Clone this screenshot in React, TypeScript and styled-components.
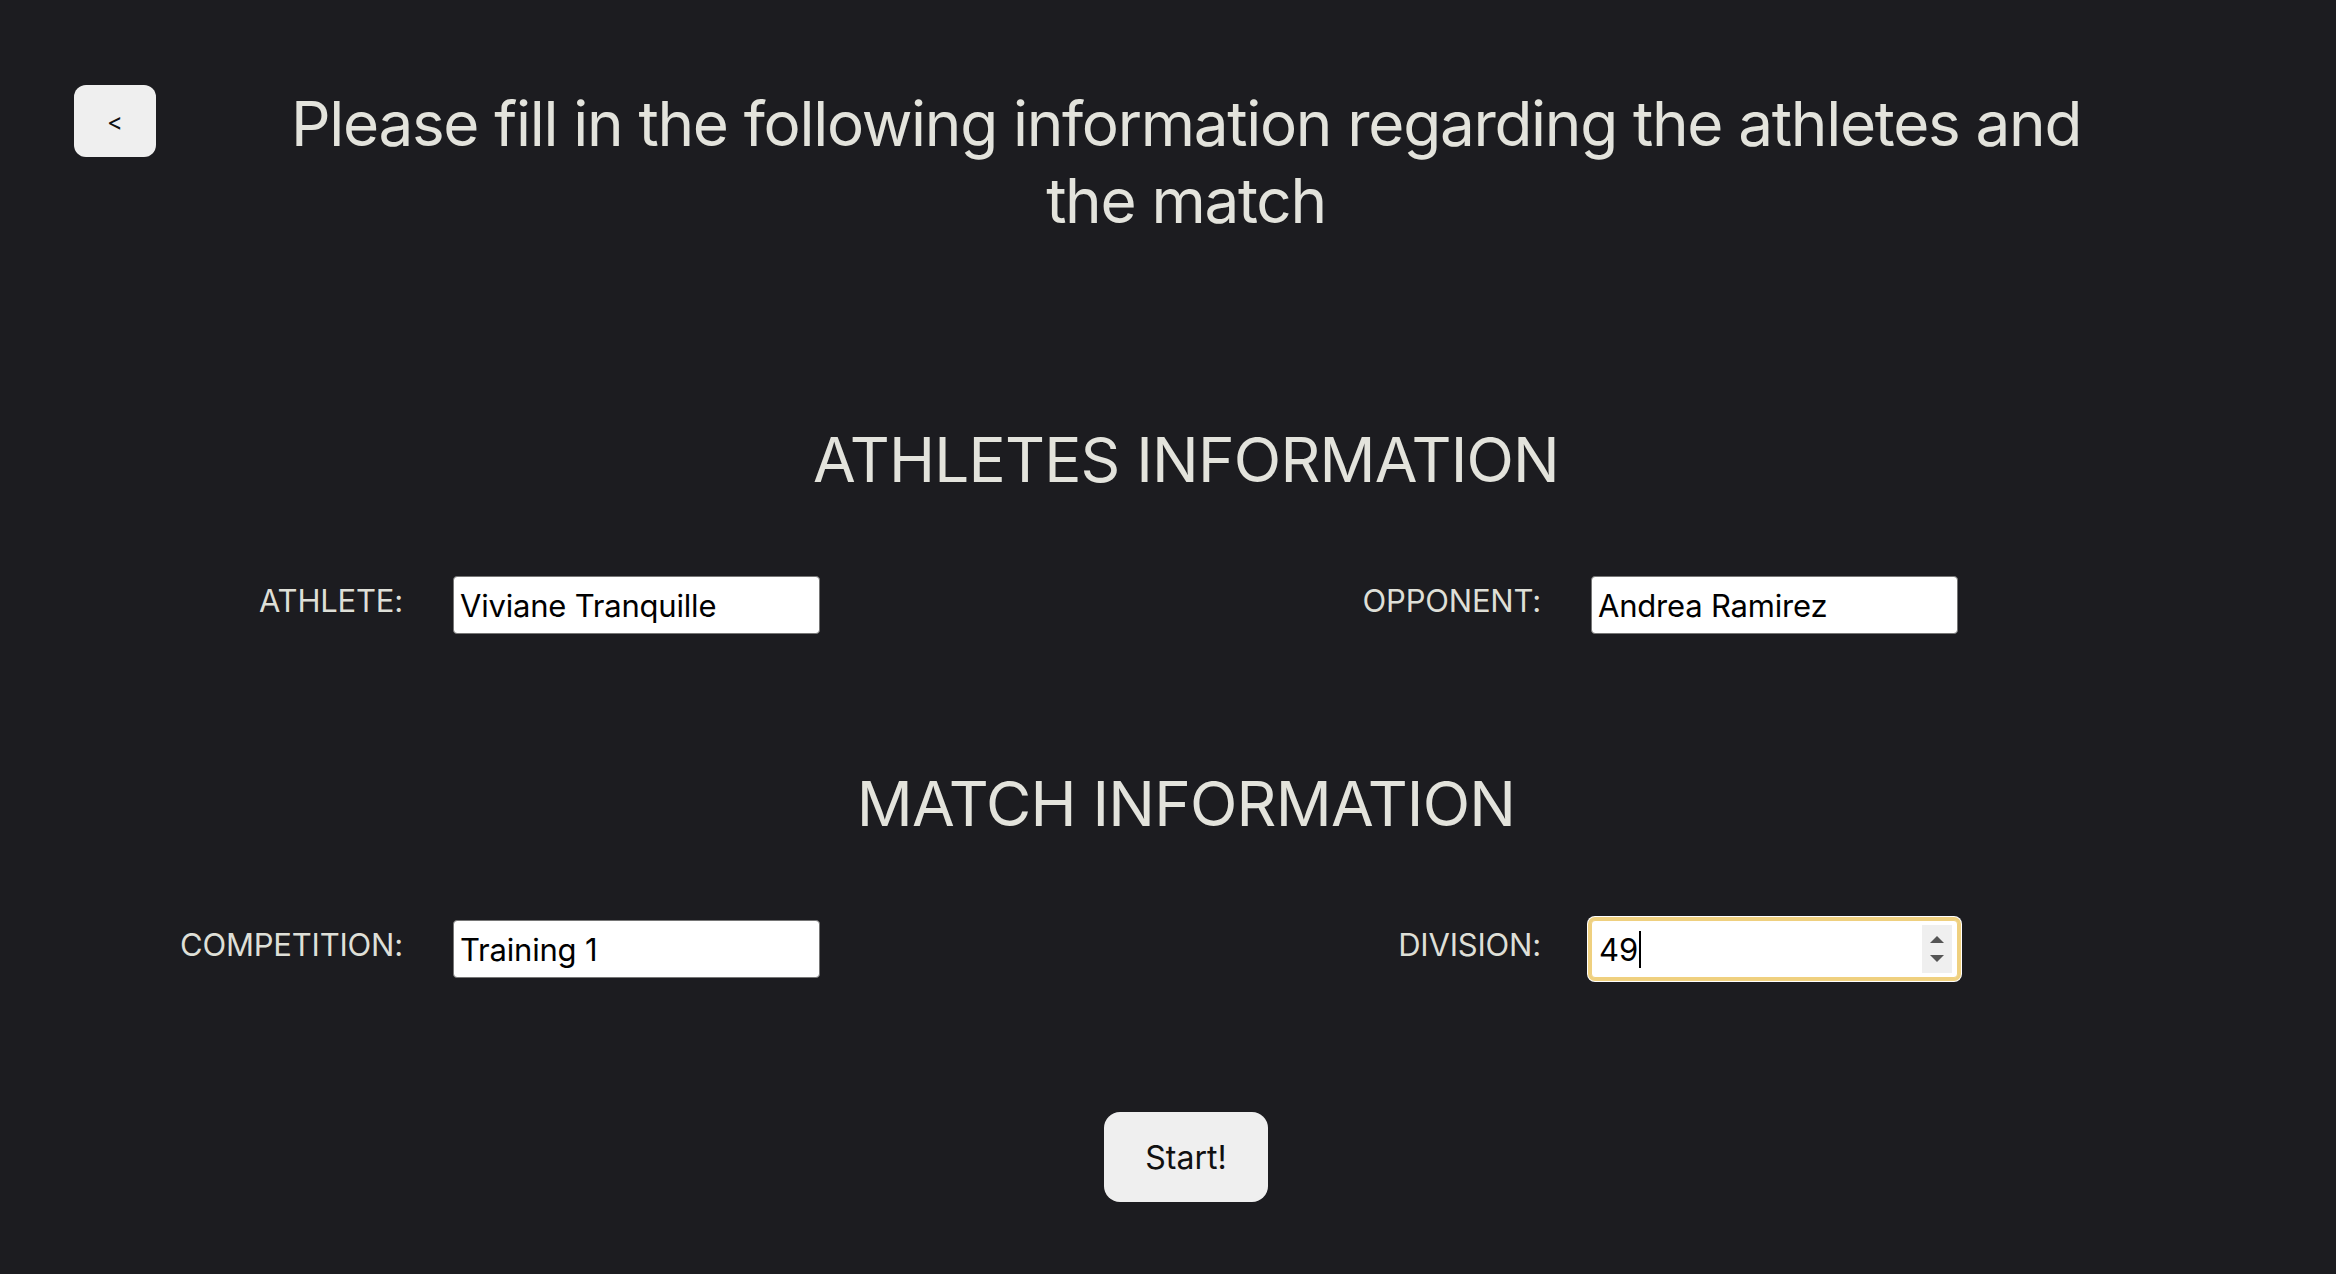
import React from "react";
import styled, { createGlobalStyle } from "styled-components";

const GlobalStyle = createGlobalStyle`
  html, body {
    margin: 0;
    padding: 0;
    background: #1c1c20;
  }
  * { box-sizing: border-box; }
  body {
    font-family: Inter, "Noto Sans", "Liberation Sans", sans-serif;
  }
`;

const Page = styled.main`
  min-height: 100vh;
  background: #1c1c20;
  color: #e3e3dc;
  padding: 85px 12px 72px 48px;
`;

const Header = styled.header`
  display: grid;
  grid-template-columns: 1fr minmax(0, 1840px) 1fr;
  align-items: start;
`;

const BackButton = styled.button`
  justify-self: start;
  margin-left: 26px;
  width: 82px;
  height: 72px;
  border: none;
  border-radius: 12px;
  background: #efefef;
  color: #111;
  font-family: inherit;
  font-size: 24px;
  cursor: pointer;
`;

const Title = styled.h1`
  margin: 0;
  text-align: center;
  font-size: 62px;
  font-weight: 400;
  line-height: 77px;
  letter-spacing: -1.3px;
`;

const Section = styled.section<{ $top: number }>`
  margin-top: ${(p) => p.$top}px;
`;

const SectionTitle = styled.h2`
  margin: 0 0 78px;
  text-align: center;
  font-size: 62px;
  font-weight: 400;
  line-height: 77px;
  letter-spacing: -0.8px;
`;

const FieldRow = styled.div`
  display: grid;
  grid-template-columns: 1fr 1fr;
`;

const Field = styled.div`
  display: grid;
  grid-template-columns: 355px 367px;
  column-gap: 50px;
  align-items: center;
`;

const Label = styled.label`
  justify-self: end;
  margin-bottom: 10px;
  font-size: 31px;
  font-weight: 400;
  color: #dedfd7;
  letter-spacing: -0.2px;
`;

const TextInput = styled.input`
  width: 367px;
  height: 58px;
  padding: 0 6px;
  border: 1px solid #767676;
  border-radius: 4px;
  background: #fff;
  color: #000;
  font-family: inherit;
  font-size: 31px;
  letter-spacing: -0.2px;
  outline: none;
`;

const NumberBox = styled.div`
  display: flex;
  align-items: center;
  width: 367px;
  height: 58px;
  padding: 0 5px 0 7px;
  border: 1px solid #efd07f;
  border-radius: 4px;
  background: #fff;
  box-shadow: 0 0 0 3px #efd07f, 0 0 0 4px #ffffff;
`;

const NumberInput = styled.input`
  width: 2ch;
  height: 100%;
  padding: 0;
  border: none;
  background: transparent;
  color: #000;
  font-family: inherit;
  font-size: 31px;
  outline: none;
  caret-color: transparent;
  -moz-appearance: textfield;
  &::-webkit-inner-spin-button,
  &::-webkit-outer-spin-button {
    -webkit-appearance: none;
    margin: 0;
  }
`;

const Caret = styled.span`
  width: 2px;
  height: 37px;
  margin-left: 1px;
  background: #000;
`;

const Spacer = styled.span`
  flex: 1;
`;

const Spinner = styled.div`
  display: flex;
  flex-direction: column;
  align-items: center;
  justify-content: center;
  gap: 12px;
  width: 30px;
  height: 48px;
  background: #efefef;
`;

const Arrow = styled.span<{ $down?: boolean }>`
  width: 0;
  height: 0;
  border-left: 7px solid transparent;
  border-right: 7px solid transparent;
  ${(p) =>
    p.$down
      ? "border-top: 7px solid #555;"
      : "border-bottom: 7px solid #555;"}
`;

const Actions = styled.div`
  display: flex;
  justify-content: center;
  margin-top: 134px;
`;

const StartButton = styled.button`
  width: 164px;
  height: 90px;
  border: none;
  border-radius: 16px;
  background: #efefef;
  color: #111;
  font-family: inherit;
  font-size: 32px;
  font-weight: 400;
  cursor: pointer;
`;

export default function App() {
  return (
    <>
      <GlobalStyle />
      <Page>
        <Header>
          <BackButton aria-label="Back">&lt;</BackButton>
          <Title>
            Please fill in the following information regarding the athletes
            and the match
          </Title>
        </Header>

        <Section $top={182}>
          <SectionTitle>ATHLETES INFORMATION</SectionTitle>
          <FieldRow>
            <Field>
              <Label htmlFor="athlete">ATHLETE:</Label>
              <TextInput id="athlete" defaultValue="Viviane Tranquille" />
            </Field>
            <Field>
              <Label htmlFor="opponent">OPPONENT:</Label>
              <TextInput id="opponent" defaultValue="Andrea Ramirez" />
            </Field>
          </FieldRow>
        </Section>

        <Section $top={131}>
          <SectionTitle>MATCH INFORMATION</SectionTitle>
          <FieldRow>
            <Field>
              <Label htmlFor="competition">COMPETITION:</Label>
              <TextInput id="competition" defaultValue="Training 1" />
            </Field>
            <Field>
              <Label htmlFor="division">DIVISION:</Label>
              <NumberBox>
                <NumberInput id="division" type="number" defaultValue={49} />
                <Caret aria-hidden />
                <Spacer />
                <Spinner aria-hidden>
                  <Arrow />
                  <Arrow $down />
                </Spinner>
              </NumberBox>
            </Field>
          </FieldRow>
        </Section>

        <Actions>
          <StartButton>Start!</StartButton>
        </Actions>
      </Page>
    </>
  );
}
